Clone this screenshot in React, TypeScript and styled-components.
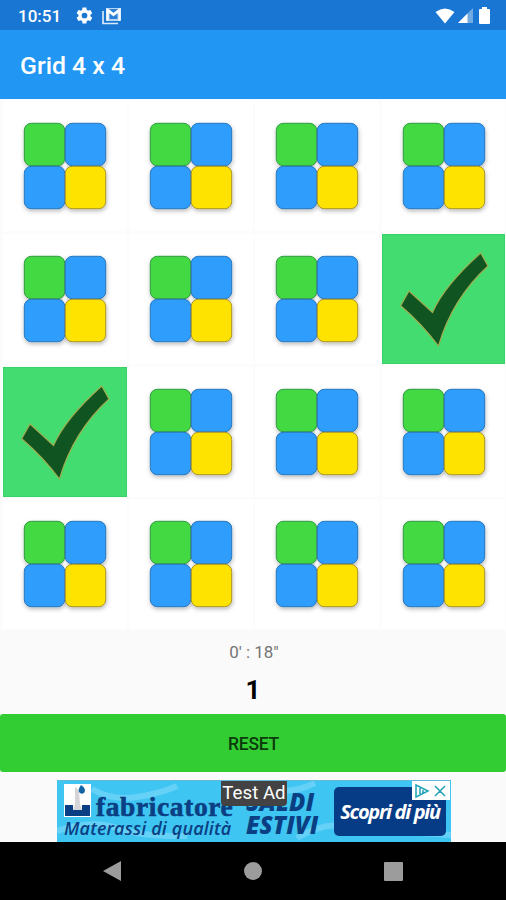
import React from "react";
import styled, { createGlobalStyle } from "styled-components";

const GlobalStyle = createGlobalStyle`
  * { box-sizing: border-box; }
  body { margin: 0; background: #fafafa; font-family: Roboto, "Liberation Sans", sans-serif; }
  svg { display: block; flex: none; }
`;

const Screen = styled.div`
  width: 506px;
  height: 900px;
  display: flex;
  flex-direction: column;
  overflow: hidden;
  background: #fafafa;
`;

const StatusBar = styled.header`
  height: 30px;
  flex: none;
  display: flex;
  align-items: center;
  padding: 1px 16px 0 18px;
  background: #1976d2;
  color: #fff;
`;

const Clock = styled.span`
  width: 57px;
  font-size: 17px;
  font-weight: 500;
  line-height: 28px;
`;

const StatusIcons = styled.div<{ $gap: number; $end?: boolean }>`
  display: flex;
  align-items: center;
  gap: ${(p) => p.$gap}px;
  margin-left: ${(p) => (p.$end ? "auto" : "0")};
`;

const AppBar = styled.div`
  height: 69px;
  flex: none;
  display: flex;
  align-items: center;
  padding: 2px 0 0 20px;
  background: #2196f3;
`;

const Title = styled.h1`
  margin: 0;
  color: #fff;
  font-size: 24.8px;
  font-weight: 500;
`;

const Board = styled.main`
  height: 531px;
  flex: none;
  display: grid;
  grid-template-columns: repeat(4, 123.6px);
  grid-auto-rows: 130px;
  column-gap: 2.6px;
  row-gap: 2.6px;
  padding: 2.4px 0 0 3px;
  background: #fcfcfc;
`;

const Cell = styled.div<{ $found: boolean }>`
  overflow: hidden;
  background: ${(p) => (p.$found ? "#43dc70" : "#fff")};
  box-shadow: ${(p) => (p.$found ? "inset 0 0 0 1px #38d368" : "none")};
`;

const Status = styled.section`
  height: 84px;
  flex: none;
  display: flex;
  flex-direction: column;
  align-items: center;
  padding-top: 11px;
`;

const Timer = styled.div`
  padding-left: 2px;
  color: #757575;
  font-size: 17px;
  line-height: 22px;
`;

const Score = styled.div`
  margin-top: 11px;
  color: #000;
  font-size: 26px;
  font-weight: 700;
  line-height: 32px;
`;

const ResetButton = styled.button`
  height: 58px;
  flex: none;
  border: 0;
  border-radius: 3px;
  padding: 2px 0 0 1px;
  background: #32cd32;
  color: #0c3a0c;
  font: 500 17.5px Roboto, sans-serif;
  letter-spacing: -0.25px;
`;

const AdSlot = styled.section`
  height: 70px;
  flex: none;
  display: flex;
  justify-content: center;
  padding: 8px 0 0 2px;
`;

const Banner = styled.div`
  position: relative;
  width: 394px;
  height: 62px;
  display: grid;
  grid-template-columns: 182px 88px 112px;
  padding-left: 7px;
  overflow: hidden;
  background: #3fc5f2;
  border-top: 1px solid #65b9db;
  color: #0b3f83;
`;

const Waves = styled.svg`
  position: absolute;
  inset: 0;
`;

const Brand = styled.div`
  position: relative;
  padding-top: 3px;
  white-space: nowrap;
`;

const BrandRow = styled.div`
  height: 33px;
  display: flex;
  gap: 5px;
`;

const BrandName = styled.span`
  padding-top: 9px;
  font: 700 27.5px/27px "Liberation Serif", serif;
  letter-spacing: 0.6px;
  -webkit-text-stroke: 0.6px #0b3f83;
`;

const Tagline = styled.div`
  font: italic 600 18px/22px "Open Sans", sans-serif;
  letter-spacing: 0.14px;
`;

const Offer = styled.div`
  position: relative;
  padding-top: 9px;
  font: italic 800 24px/23px "Open Sans", sans-serif;
  letter-spacing: -0.1px;
`;

const OfferLine = styled.div<{ $spacing: number }>`
  letter-spacing: ${(p) => p.$spacing}px;
`;

const CallToAction = styled.div`
  position: relative;
  height: 49px;
  margin-top: 6px;
  display: flex;
  align-items: center;
  justify-content: center;
  border-radius: 5px;
  background: #063c86;
  color: #fff;
  font: italic 700 20px "Open Sans", sans-serif;
  letter-spacing: -1.3px;
  white-space: nowrap;
`;

const AdChoices = styled.div`
  position: absolute;
  top: 0;
  right: 1px;
  width: 38px;
  height: 19px;
  padding: 2px;
  background: #fff;
`;

const TestLabel = styled.div`
  position: absolute;
  left: 164px;
  top: -1px;
  width: 66px;
  height: 26px;
  border-radius: 0 0 4px 4px;
  background: #434343;
  color: #fff;
  font-size: 18.7px;
  line-height: 27px;
  text-align: center;
  white-space: nowrap;
`;

const NavBar = styled.nav`
  height: 58px;
  flex: none;
  display: grid;
  grid-template-columns: repeat(3, 140px);
  justify-content: center;
  justify-items: center;
  align-items: center;
  background: #000;
`;

const GearIcon = () => (
  <svg width="19" height="19" viewBox="0 0 24 24" fill="#fff">
    <path d="M19.4 13c0-.3.1-.7.1-1s0-.7-.1-1l2.1-1.600c.2-.2.2-.4.1-.7l-2-3.400c-.1-.2-.4-.3-.6-.2l-2.500 1c-.5-.4-1.100-.7-1.700-1l-.4-2.600c0-.3-.2-.5-.5-.5h-4c-.3 0-.5.2-.5.4l-.4 2.700c-.6.2-1.200.6-1.700 1l-2.500-1c-.2-.1-.5 0-.6.2l-2 3.400c-.1.3-.1.5.1.7L4.500 11c0 .3-.1.7-.1 1s0 .7.1 1l-2.200 1.600c-.2.2-.2.4-.1.7l2 3.400c.1.2.4.3.6.2l2.500-1c.5.4 1.100.7 1.700 1l.4 2.600c0 .3.2.5.5.5h4c.3 0 .5-.2.5-.4l.4-2.700c.6-.2 1.200-.6 1.700-1l2.500 1c.2.1.5 0 .6-.2l2-3.400c.1-.3.1-.5-.1-.7zM12 15.600a3.600 3.600 0 1 1 0-7.200 3.600 3.600 0 0 1 0 7.200z" />
  </svg>
);

const MailStackIcon = () => (
  <svg width="20" height="18" viewBox="0 0 20 18">
    <path d="M1 4v12.500h15" fill="none" stroke="#d9e8fa" strokeWidth="1.700" />
    <rect x="4" y="1" width="15" height="13" rx="1" fill="#b9d5f4" />
    <path d="M5.500 13.500V3l6 4.500 6-4.500v10.500" fill="none" stroke="#fff" strokeWidth="2.200" />
    <path d="M7 2h9l-4.500 3.700zM7.500 6.500V12h8V6.500l-4 3z" fill="#2b80d3" />
  </svg>
);

const WifiIcon = () => (
  <svg width="20" height="16" viewBox="0 0 20 16">
    <path d="M.5 4Q10-3 19.500 4L10 15.500z" fill="#fff" />
  </svg>
);

const SignalIcon = () => (
  <svg width="15" height="15" viewBox="0 0 15 15">
    <path d="M0 15 15 0v15z" fill="#72aae4" />
    <path d="M0 15 9.500 5.500V15z" fill="#fff" />
  </svg>
);

const BatteryIcon = () => (
  <svg width="11" height="17" viewBox="0 0 11 17">
    <path d="M3 0h5v2h2q1 0 1 1v13q0 1-1 1H1q-1 0-1-1V3q0-1 1-1h2z" fill="#fff" />
  </svg>
);

const squares = [
  { x: 21, y: 22, fill: "#43d943", edge: "#319a43" },
  { x: 62, y: 22, fill: "#2e9dfb", edge: "#2877bd" },
  { x: 21, y: 65, fill: "#2e9dfb", edge: "#2877bd" },
  { x: 62, y: 65, fill: "#ffe300", edge: "#a8932a" },
];

const TileArt = () => (
  <svg width="124" height="130" viewBox="0 0 124 130">
    <defs>
      <filter id="tileShadow" x="-20%" y="-20%" width="140%" height="140%">
        <feDropShadow dx="0.500" dy="2" stdDeviation="2" floodColor="#000" floodOpacity="0.280" />
      </filter>
    </defs>
    <g filter="url(#tileShadow)">
      {squares.map((s) => (
        <rect key={`${s.x}-${s.y}`} x={s.x + 0.3} y={s.y + 0.3} width="40.400" height="42.400" rx="7" fill={s.fill} stroke={s.edge} strokeWidth="1" />
      ))}
    </g>
    <path d="m62 61.500 2.500 3.500-2.500 3.500-2.500-3.500z" fill="#f4f4f4" />
  </svg>
);

const CheckArt = () => (
  <svg width="124" height="130" viewBox="0 0 124 130">
    <path
      d="M27 57 50.500 78.500Q62 52 98.700 19L106 32Q70 65 56.500 112Q40 90 18.700 71.700z"
      fill="#105421"
      stroke="#9fae50"
      strokeWidth="1.200"
    />
  </svg>
);

const FactoryLogo = () => (
  <svg width="27" height="33" viewBox="0 0 27 33">
    <path d="M0 0h27v33H0z" fill="#fff" />
    <path d="M1 21h8v5h9v-5h8v11H1z" fill="#0b3f83" />
    <path d="m11 3 4 3 1 14 2 6H9l2-6z" fill="#d5d5d8" />
    <path d="M17 1q6 4 3 8-3 2-5-1-1-3 2-7z" fill="#1264a5" />
  </svg>
);

const found = [7, 8];

export default function App() {
  return (
    <Screen>
      <GlobalStyle />
      <StatusBar>
        <Clock>10:51</Clock>
        <StatusIcons $gap={8}>
          <GearIcon />
          <MailStackIcon />
        </StatusIcons>
        <StatusIcons $gap={3} $end>
          <WifiIcon />
          <SignalIcon />
          <span />
          <BatteryIcon />
        </StatusIcons>
      </StatusBar>
      <AppBar>
        <Title>Grid 4 x 4</Title>
      </AppBar>
      <Board>
        {Array.from({ length: 16 }, (_, i) => (
          <Cell key={i} $found={found.includes(i)}>
            {found.includes(i) ? <CheckArt /> : <TileArt />}
          </Cell>
        ))}
      </Board>
      <Status>
        <Timer>0' : 18"</Timer>
        <Score>1</Score>
      </Status>
      <ResetButton>RESET</ResetButton>
      <AdSlot>
        <Banner>
          <Waves width="394" height="62" viewBox="0 0 394 62" fill="none" stroke="#66d1f7" strokeWidth="6">
            <path d="M35 8q20 12 45 8t40-11M0 50q35-12 60-3t70 8M258 2q-22 11-45 7M240 57q25-15 45-12t109 9" />
          </Waves>
          <Brand>
            <BrandRow>
              <FactoryLogo />
              <BrandName>fabricatore</BrandName>
            </BrandRow>
            <Tagline>Materassi di qualità</Tagline>
          </Brand>
          <Offer>
            <OfferLine $spacing={0.3}>SALDI</OfferLine>
            <OfferLine $spacing={0.1}>ESTIVI</OfferLine>
          </Offer>
          <CallToAction>Scopri di più</CallToAction>
          <AdChoices>
            <svg width="34" height="16" viewBox="0 0 34 16" fill="none" stroke="#20a2b7" strokeWidth="1.500">
              <path d="M2 2v12l12-6zM6 5v6M9 7v4M21 3l10 10M31 3 21 13" />
            </svg>
          </AdChoices>
          <TestLabel>Test Ad</TestLabel>
        </Banner>
      </AdSlot>
      <NavBar>
        <svg width="20" height="22" viewBox="0 0 20 22"><path d="M0 11 18 1v20z" fill="#9c9c9c" /></svg>
        <svg width="18" height="18" viewBox="0 0 18 18"><circle cx="9" cy="9" r="9" fill="#9c9c9c" /></svg>
        <svg width="19" height="19" viewBox="0 0 19 19"><rect width="19" height="19" rx="1" fill="#9c9c9c" /></svg>
      </NavBar>
    </Screen>
  );
}
